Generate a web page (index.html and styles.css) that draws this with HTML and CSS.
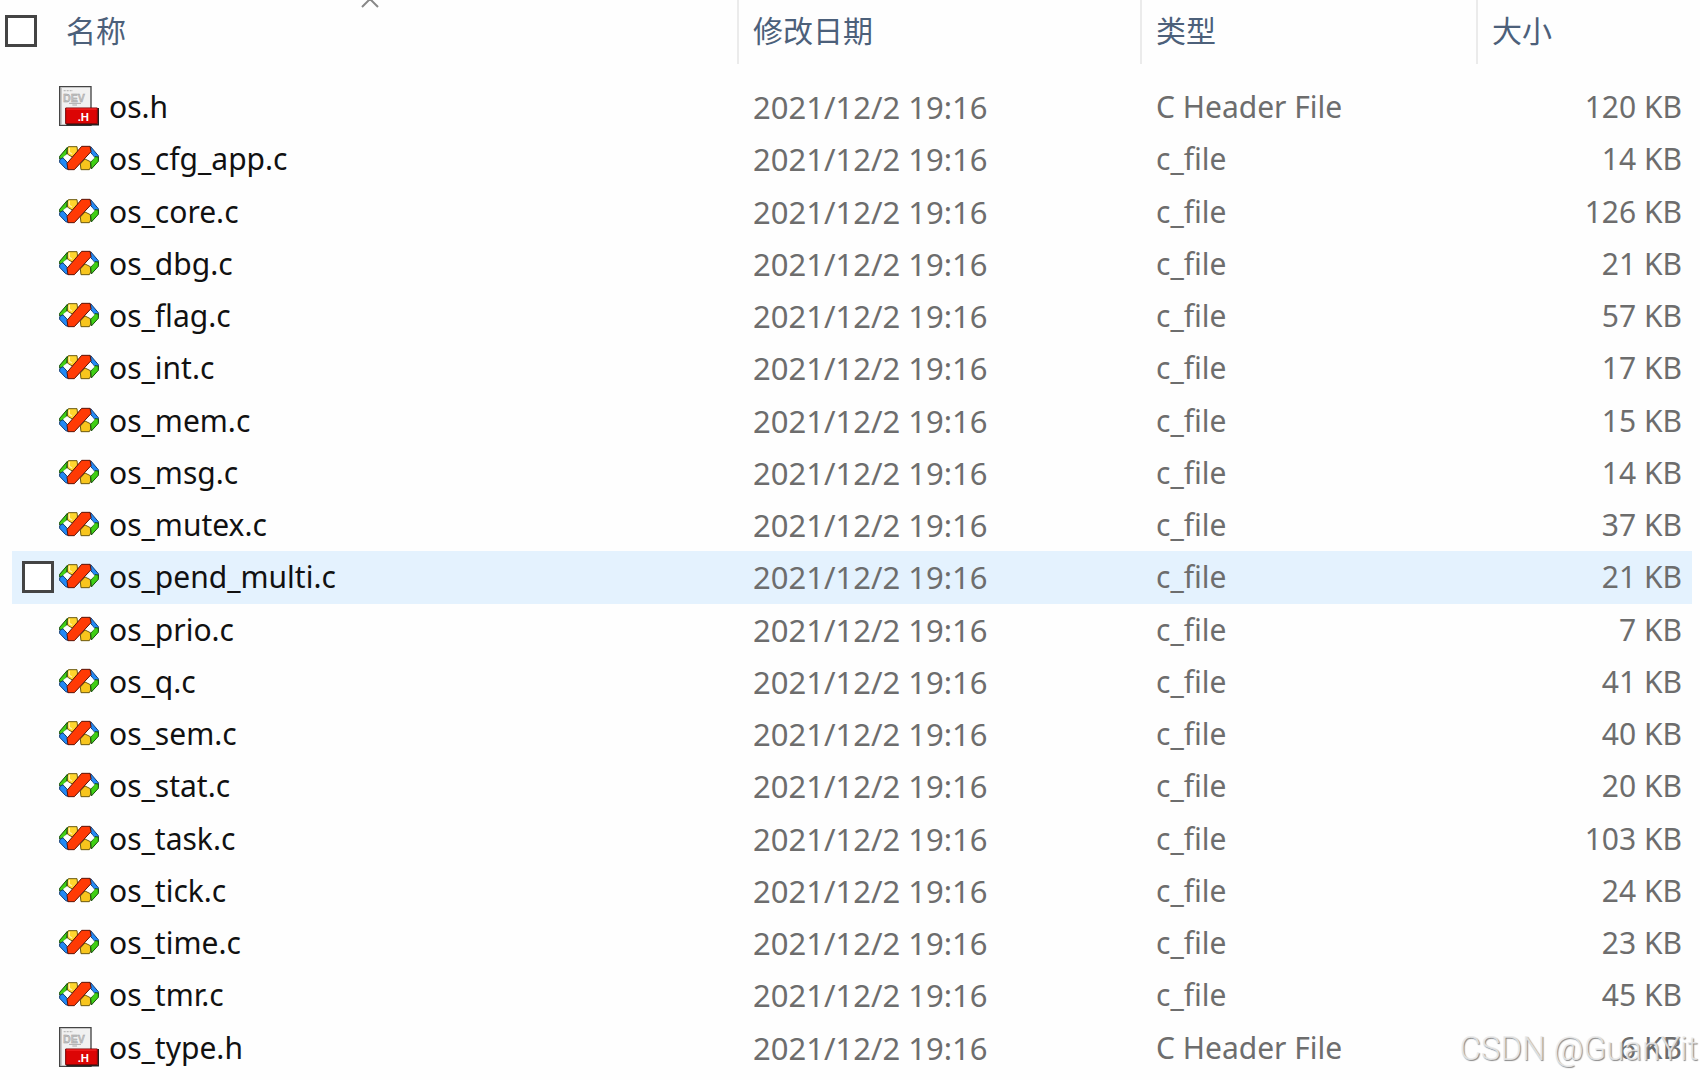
FILE: index.html
```html
<!DOCTYPE html>
<html lang="zh-CN">
    <head>
        <meta charset="UTF-8" />
        <meta name="viewport" content="width=device-width, initial-scale=1.0" />
        <title>os</title>
        <link rel="stylesheet" href="styles.css">
    </head>
    <body>
        <svg class="sprite" width="0" height="0" aria-hidden="true">
            <symbol id="icon-h" viewBox="0 0 120 120">
                <path d="M2 2H96V118H2Z" fill="#f1f1f1" stroke="#444" stroke-width="4" />
                <path d="M6 6V115" stroke="#999" stroke-width="3" />
                <path d="M14 14H42" stroke="#bbb" stroke-width="4" stroke-dasharray="6 3" />
                <text x="12" y="47" class="icon-dev">DEV</text>
                <path d="M30 52H66M40 57H54" stroke="#aaa" stroke-width="3" />
                <path d="M22 116H118V66" fill="none" stroke="#222" stroke-width="5" />
                <path d="M20 66H115V113H20Z" fill="#dc0505" stroke="#700" stroke-width="3" />
                <path d="M22 69H113" stroke="#f33" stroke-width="3" />
                <text x="56" y="104" class="icon-ext">.H</text>
            </symbol>
            <symbol id="icon-c" viewBox="0 0 120 74">
                <path d="M28 3H54L56 20L40 34L26 26L24 12Z" fill="#ffd52e" stroke="#6b5a10" stroke-width="3" />
                <path d="M31 6V20L39 25" fill="none" stroke="#fff2a8" stroke-width="4" />
                <path d="M2 32L25 5L23 25L11 42L2 40Z" fill="#3fcf14" stroke="#174f0c" stroke-width="3" />
                <path d="M2 42L12 36L27 53V71L20 69L2 50Z" fill="#2389f5" stroke="#133d73" stroke-width="3" />
                <path d="M12 35L23 26L34 35L24 46Z" fill="#fff" />
                <path d="M64 55L78 40L94 48L95 64L91 72H66Z" fill="#f8c51d" stroke="#6b5a10" stroke-width="3" />
                <path d="M95 3L118 30V42L108 38L95 20Z" fill="#2389f5" stroke="#133d73" stroke-width="3" />
                <path d="M118 34V47L97 70L95 50L108 33Z" fill="#3fcf14" stroke="#174f0c" stroke-width="3" />
                <path d="M85 36L97 25L107 36L96 47Z" fill="#fff" />
                <path d="M68 2H93L96 18L46 72H27L24 53Z" fill="#ff3a05" stroke="#5a1408" stroke-width="3" />
            </symbol>
        </svg>

        <table class="files">
            <thead>
                <tr>
                    <th class="col-name">
                        <div class="head">
                            <input type="checkbox" class="check" aria-label="全选" />
                            <button type="button">名称</button>
                            <svg class="sort" viewBox="0 0 18 8" aria-hidden="true"><path d="M1 7L9 -1L17 7" /></svg>
                        </div>
                    </th>
                    <th class="col-date"><div class="head"><button type="button">修改日期</button></div></th>
                    <th class="col-type"><div class="head"><button type="button">类型</button></div></th>
                    <th class="col-size"><div class="head"><button type="button">大小</button></div></th>
                </tr>
            </thead>
            <tbody>
                <tr><td><div class="name"><svg class="icon-h"><use href="#icon-h" /></svg>os.h</div></td><td class="date">2021/12/2 19:16</td><td>C Header File</td><td>120 KB</td></tr>
                <tr><td><div class="name"><svg class="icon-c"><use href="#icon-c" /></svg>os_cfg_app.c</div></td><td class="date">2021/12/2 19:16</td><td>c_file</td><td>14 KB</td></tr>
                <tr><td><div class="name"><svg class="icon-c"><use href="#icon-c" /></svg>os_core.c</div></td><td class="date">2021/12/2 19:16</td><td>c_file</td><td>126 KB</td></tr>
                <tr><td><div class="name"><svg class="icon-c"><use href="#icon-c" /></svg>os_dbg.c</div></td><td class="date">2021/12/2 19:16</td><td>c_file</td><td>21 KB</td></tr>
                <tr><td><div class="name"><svg class="icon-c"><use href="#icon-c" /></svg>os_flag.c</div></td><td class="date">2021/12/2 19:16</td><td>c_file</td><td>57 KB</td></tr>
                <tr><td><div class="name"><svg class="icon-c"><use href="#icon-c" /></svg>os_int.c</div></td><td class="date">2021/12/2 19:16</td><td>c_file</td><td>17 KB</td></tr>
                <tr><td><div class="name"><svg class="icon-c"><use href="#icon-c" /></svg>os_mem.c</div></td><td class="date">2021/12/2 19:16</td><td>c_file</td><td>15 KB</td></tr>
                <tr><td><div class="name"><svg class="icon-c"><use href="#icon-c" /></svg>os_msg.c</div></td><td class="date">2021/12/2 19:16</td><td>c_file</td><td>14 KB</td></tr>
                <tr><td><div class="name"><svg class="icon-c"><use href="#icon-c" /></svg>os_mutex.c</div></td><td class="date">2021/12/2 19:16</td><td>c_file</td><td>37 KB</td></tr>
                <tr class="active"><td><label class="name"><input type="checkbox" class="check" /><svg class="icon-c"><use href="#icon-c" /></svg>os_pend_multi.c</label></td><td class="date">2021/12/2 19:16</td><td>c_file</td><td>21 KB</td></tr>
                <tr><td><div class="name"><svg class="icon-c"><use href="#icon-c" /></svg>os_prio.c</div></td><td class="date">2021/12/2 19:16</td><td>c_file</td><td>7 KB</td></tr>
                <tr><td><div class="name"><svg class="icon-c"><use href="#icon-c" /></svg>os_q.c</div></td><td class="date">2021/12/2 19:16</td><td>c_file</td><td>41 KB</td></tr>
                <tr><td><div class="name"><svg class="icon-c"><use href="#icon-c" /></svg>os_sem.c</div></td><td class="date">2021/12/2 19:16</td><td>c_file</td><td>40 KB</td></tr>
                <tr><td><div class="name"><svg class="icon-c"><use href="#icon-c" /></svg>os_stat.c</div></td><td class="date">2021/12/2 19:16</td><td>c_file</td><td>20 KB</td></tr>
                <tr><td><div class="name"><svg class="icon-c"><use href="#icon-c" /></svg>os_task.c</div></td><td class="date">2021/12/2 19:16</td><td>c_file</td><td>103 KB</td></tr>
                <tr><td><div class="name"><svg class="icon-c"><use href="#icon-c" /></svg>os_tick.c</div></td><td class="date">2021/12/2 19:16</td><td>c_file</td><td>24 KB</td></tr>
                <tr><td><div class="name"><svg class="icon-c"><use href="#icon-c" /></svg>os_time.c</div></td><td class="date">2021/12/2 19:16</td><td>c_file</td><td>23 KB</td></tr>
                <tr><td><div class="name"><svg class="icon-c"><use href="#icon-c" /></svg>os_tmr.c</div></td><td class="date">2021/12/2 19:16</td><td>c_file</td><td>45 KB</td></tr>
                <tr><td><div class="name"><svg class="icon-h"><use href="#icon-h" /></svg>os_type.h</div></td><td class="date">2021/12/2 19:16</td><td>C Header File</td><td>6 KB</td></tr>
            </tbody>
        </table>
        <div class="watermark">CSDN @GuanYit</div>
    </body>
</html>
```
FILE: styles.css
```css
* {
    margin: 0;
    padding: 0;
    box-sizing: border-box;
}
body {
    position: relative;
    min-height: 100vh;
    padding-bottom: 6px;
    background-color: #fefefe;
    font-family: "Noto Sans", "Noto Sans CJK SC", sans-serif;
    font-size: 30px;
    line-height: 40px;
    color: #6d6d6d;
}
.sprite {
    position: absolute;
}
.files {
    width: 100%;
    height: calc(100vh - 6px);
    table-layout: fixed;
    border-collapse: separate;
    border-spacing: 0;
}
.col-date {
    width: 403px;
}
.col-type {
    width: 336px;
}
.col-size {
    width: 224px;
}
/* header */
.files thead tr {
    height: 81px;
}
.files th {
    vertical-align: top;
    text-align: left;
    font-weight: normal;
}
.head {
    position: relative;
    display: flex;
    align-items: center;
    height: 64px;
    padding: 0 14px 3px;
    border-left: 2px solid #ebebeb;
}
.col-name .head {
    gap: 29px;
    padding-left: 5px;
    border-left: 0;
}
.head button {
    border: 0;
    background: none;
    font: inherit;
    color: #4c607a;
    cursor: pointer;
}
.sort {
    position: absolute;
    top: 0;
    left: 50%;
    width: 18px;
    height: 8px;
    margin-left: -8px;
    fill: none;
    stroke: #888;
    stroke-width: 2;
}
.check {
    appearance: none;
    flex: none;
    width: 32px;
    height: 32px;
    border: 3px solid #444;
    background-color: #fff;
}
/* rows */
.files td {
    padding-left: 16px;
    background-clip: padding-box;
    white-space: nowrap;
}
.files td:first-child {
    padding-left: 10px;
    border-left: 12px solid transparent;
    color: #111;
}
.files td:last-child {
    padding-right: 10px;
    border-right: 8px solid transparent;
    text-align: right;
}
.files .date {
    font-size: 31px;
}
.active td {
    background-color: #e4f2fe;
}
.name {
    display: flex;
    align-items: center;
    padding-left: 37px;
}
.active .name {
    gap: 5px;
    padding-left: 0;
}
.name .icon-h,
.name .icon-c {
    flex: none;
    width: 40px;
    height: 40px;
    margin-right: 10px;
    margin-bottom: 2px;
}
.active .name .icon-c {
    margin-right: 5px;
}
.icon-dev {
    font: bold 32px "Liberation Sans", sans-serif;
    fill: #c4c4c4;
    stroke: #999;
    stroke-width: 1;
}
.icon-ext {
    font: bold 34px "Liberation Sans", sans-serif;
    fill: #fff;
}
.watermark {
    position: absolute;
    right: 2px;
    bottom: 11px;
    font-family: Roboto, sans-serif;
    font-size: 33px;
    font-weight: 300;
    color: rgba(235, 235, 235, 0.85);
    text-shadow: 1px 1px 1px #888;
    pointer-events: none;
}
```
